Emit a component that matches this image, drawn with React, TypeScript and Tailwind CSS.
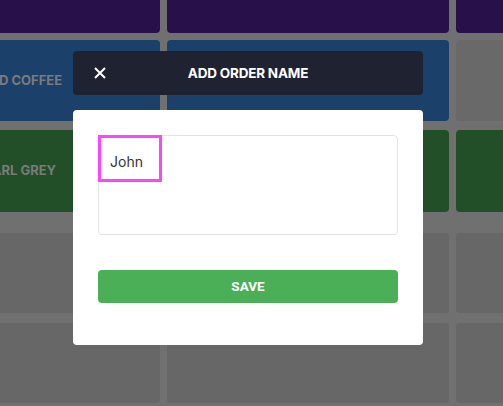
import React from "react";

type Tile = { bg: string; label?: string };

const rows: { cls: string; tiles: Tile[] }[] = [
  {
    cls: "h-[80px] -mt-[47px]",
    tiles: [{ bg: "bg-[#28114b]" }, { bg: "bg-[#28114b]" }, { bg: "bg-[#28114b]" }],
  },
  {
    cls: "h-[81px] mt-[7px]",
    tiles: [{ bg: "bg-[#1b4069]", label: "ICED COFFEE" }, { bg: "bg-[#1b4069]" }, { bg: "bg-[#696969]" }],
  },
  {
    cls: "h-[82px] mt-[9px]",
    tiles: [{ bg: "bg-[#224f28]", label: "EARL GREY" }, { bg: "bg-[#224f28]" }, { bg: "bg-[#224f28]" }],
  },
  {
    cls: "h-[80px] mt-[21px]",
    tiles: [{ bg: "bg-[#676767]" }, { bg: "bg-[#676767]" }, { bg: "bg-[#676767]" }],
  },
  {
    cls: "h-[80px] mt-[10px]",
    tiles: [{ bg: "bg-[#676767]" }, { bg: "bg-[#676767]" }, { bg: "bg-[#676767]" }],
  },
];

const App = () => {
  return (
    <div className="relative h-[406px] w-[503px] overflow-hidden bg-[#707070] font-['Inter',sans-serif]">
      {/* product tiles under the overlay */}
      <div className="flex flex-col -ml-[122px]">
        {rows.map((row, i) => (
          <div key={i} className={`grid grid-cols-[282px_282px_282px] gap-x-[7px] ${row.cls}`}>
            {row.tiles.map((t, j) => (
              <div key={j} className={`flex items-center justify-center rounded-[4px] pl-[2px] ${t.bg}`}>
                {t.label && (
                  <span className="text-[13px] font-bold text-[#7b7b7b]">{t.label}</span>
                )}
              </div>
            ))}
          </div>
        ))}
      </div>

      {/* modal */}
      <div className="absolute left-[73px] top-[51px] w-[350px] flex flex-col gap-[15px]">
        <div className="relative flex h-[44px] items-center justify-center rounded-[4px] bg-[#1f2331]">
          <button className="absolute left-[20px] top-[15px] text-white">
            <svg width="14" height="14" viewBox="0 0 14 14" fill="none" stroke="currentColor" strokeWidth="2">
              <path d="M2 2 L12 12 M12 2 L2 12" />
            </svg>
          </button>
          <span className="text-[13.5px] font-bold tracking-[-0.2px] text-white">ADD ORDER NAME</span>
        </div>

        <div className="flex flex-col rounded-[4px] bg-white px-[25px] pt-[25px] pb-[42px]">
          <div className="relative h-[100px] rounded-[4px] border border-[#e3e3e3]">
            <div className="absolute -left-[1px] -top-[1px] h-[47px] w-[64px] border-[3px] border-[#fd45fc]" />
            <span className="absolute left-[11px] top-[15px] text-[14px] text-[#333333]">John</span>
          </div>
          <button className="mt-[35px] flex h-[33px] items-center justify-center rounded-[4px] bg-[#4aaf56] text-[13.5px] font-bold text-white font-['Roboto',sans-serif]">
            SAVE
          </button>
        </div>
      </div>
    </div>
  );
};

export default App;
